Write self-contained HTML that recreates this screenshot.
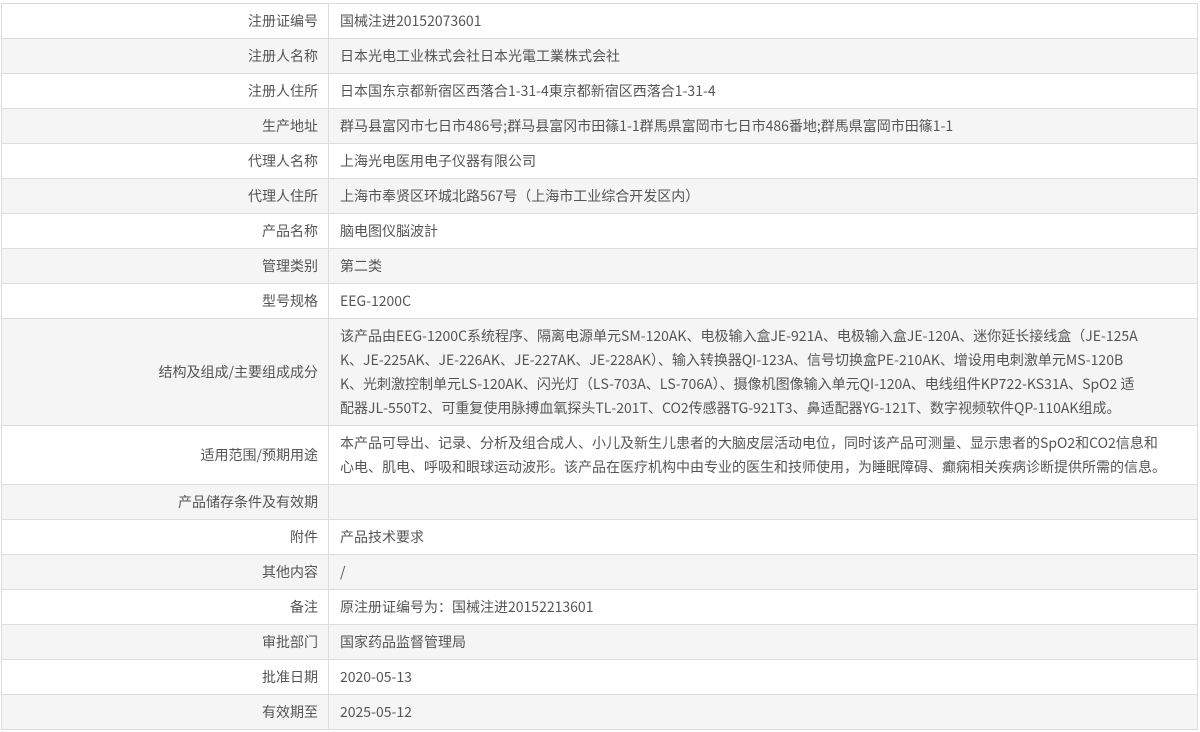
<!DOCTYPE html>
<html><head><meta charset="utf-8"><style>
html,body{margin:0;padding:0;background:#fff;width:1200px;height:732px;overflow:hidden}
table{position:absolute;left:1px;top:3px;width:1197px;border-collapse:collapse;font-family:"Noto Sans CJK SC","Liberation Sans",sans-serif;font-size:14px;color:#555}
td{border:1px solid #dcdcdc;padding:5px 0;line-height:24px;vertical-align:middle;white-space:nowrap;overflow:hidden}
tr{height:35px}
td.l{width:316px;text-align:right;padding-right:10px}
td.v{padding-left:11px;padding-right:8px}
tr:nth-child(even){background:#f5f5f5}
</style></head><body>
<table>
<tr><td class="l">注册证编号</td><td class="v">国械注进20152073601</td></tr>
<tr><td class="l">注册人名称</td><td class="v">日本光电工业株式会社日本光電工業株式会社</td></tr>
<tr><td class="l">注册人住所</td><td class="v">日本国东京都新宿区西落合1-31-4東京都新宿区西落合1-31-4</td></tr>
<tr><td class="l">生产地址</td><td class="v">群马县富冈市七日市486号;群马县富冈市田篠1-1群馬県富岡市七日市486番地;群馬県富岡市田篠1-1</td></tr>
<tr><td class="l">代理人名称</td><td class="v">上海光电医用电子仪器有限公司</td></tr>
<tr><td class="l">代理人住所</td><td class="v">上海市奉贤区环城北路567号（上海市工业综合开发区内）</td></tr>
<tr><td class="l">产品名称</td><td class="v">脑电图仪脳波計</td></tr>
<tr><td class="l">管理类别</td><td class="v">第二类</td></tr>
<tr><td class="l">型号规格</td><td class="v">EEG-1200C</td></tr>
<tr><td class="l">结构及组成/主要组成成分</td><td class="v">该产品由EEG-1200C系统程序、隔离电源单元SM-120AK、电极输入盒JE-921A、电极输入盒JE-120A、迷你延长接线盒（JE-125A<br>K、JE-225AK、JE-226AK、JE-227AK、JE-228AK）、输入转换器QI-123A、信号切换盒PE-210AK、增设用电刺激单元MS-120B<br>K、光刺激控制单元LS-120AK、闪光灯（LS-703A、LS-706A）、摄像机图像输入单元QI-120A、电线组件KP722-KS31A、SpO2 适<br>配器JL-550T2、可重复使用脉搏血氧探头TL-201T、CO2传感器TG-921T3、鼻适配器YG-121T、数字视频软件QP-110AK组成。</td></tr>
<tr><td class="l">适用范围/预期用途</td><td class="v">本产品可导出、记录、分析及组合成人、小儿及新生儿患者的大脑皮层活动电位，同时该产品可测量、显示患者的SpO2和CO2信息和<br>心电、肌电、呼吸和眼球运动波形。该产品在医疗机构中由专业的医生和技师使用，为睡眠障碍、癫痫相关疾病诊断提供所需的信息。</td></tr>
<tr><td class="l">产品储存条件及有效期</td><td class="v"></td></tr>
<tr><td class="l">附件</td><td class="v">产品技术要求</td></tr>
<tr><td class="l">其他内容</td><td class="v">/</td></tr>
<tr><td class="l">备注</td><td class="v">原注册证编号为：国械注进20152213601</td></tr>
<tr><td class="l">审批部门</td><td class="v">国家药品监督管理局</td></tr>
<tr><td class="l">批准日期</td><td class="v">2020-05-13</td></tr>
<tr><td class="l">有效期至</td><td class="v">2025-05-12</td></tr>
</table>
</body></html>
